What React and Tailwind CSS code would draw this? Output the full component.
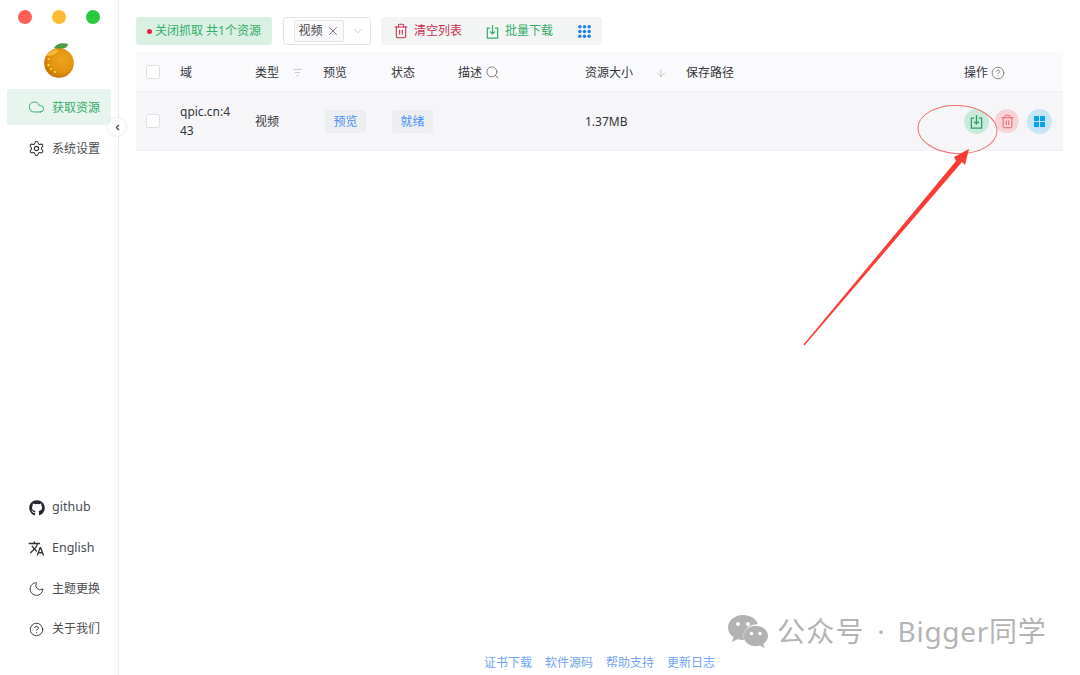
import { Cloud, Settings, Moon, CircleHelp, Trash2, X, ChevronDown, ChevronLeft, Search, ArrowDown } from 'lucide-react';
import { FaGithub } from 'react-icons/fa';
import { MdTranslate } from 'react-icons/md';

const cols = 'grid grid-cols-[44px_75px_68px_68px_67px_127px_101px_278px_1fr] items-center';

function DownloadIcon({ className }) {
  return (
    <svg viewBox="0 0 16 16" fill="none" stroke="currentColor" strokeWidth="1.3" className={className}>
      <path d="M5.5 4.5H2.5v10.500h11V4.500h-3" />
      <path d="M8 1v9.500M5.400 8 8 10.600 10.600 8" />
    </svg>
  );
}

function DotsIcon({ className }) {
  const dots = [];
  for (let y = 0; y < 3; y++) {
    for (let x = 0; x < 3; x++) {
      dots.push(<circle key={`${x}-${y}`} cx={2 + x * 5} cy={2 + y * 5} r="1.900" />);
    }
  }
  return (
    <svg viewBox="0 0 14 14" fill="currentColor" className={className}>
      {dots}
    </svg>
  );
}

function Orange() {
  return (
    <svg viewBox="0 0 32 36" className="w-[32px] h-[36px]">
      <defs>
        <radialGradient id="orange" cx="0.6" cy="0.42" r="0.65">
          <stop offset="0" stopColor="#eaa51d" />
          <stop offset="0.6" stopColor="#e3930f" />
          <stop offset="1" stopColor="#c26a07" />
        </radialGradient>
      </defs>
      <path d="M11 6C13 2 19 0 25 2c0 4-8 7-14 4Z" fill="#4f9a45" />
      <path d="M16 5.500c-.5 1-1 1.500-1 3" stroke="#7a5a20" strokeWidth="0.800" fill="none" />
      <circle cx="16" cy="21" r="14.800" fill="url(#orange)" />
      <path d="M3 14c2-4 8-7 12-6 1 3-6 7-12 6Z" fill="#f4b733" />
      <circle cx="5.500" cy="17" r="1.100" fill="#f5e23a" />
      <circle cx="5.500" cy="23" r="1.200" fill="#f5e23a" />
      <circle cx="8" cy="27" r="1.100" fill="#f5e23a" />
      <circle cx="12" cy="30" r="1.100" fill="#f5e23a" />
    </svg>
  );
}

function WeChat() {
  return (
    <svg viewBox="0 0 40 33" fill="#b3b3b3" className="w-[40px] h-[33px]">
      <path d="M15 0C6.700 0 0 5.600 0 12.500c0 3.900 2.100 7.300 5.500 9.600L4 27l5.600-2.800c1.700.5 3.500.8 5.400.8h1.200c-.5-1.300-.7-2.600-.7-4 0-6.600 6-11.800 13.600-11.800h1C28.200 3.600 22.200 0 15 0Z" />
      <path d="M40 21c0-5.600-5.500-10.200-12.200-10.200S15.600 15.400 15.600 21s5.500 10.200 12.200 10.200c1.500 0 2.900-.2 4.200-.6l4.600 2.400-1.200-4C38.200 26.900 40 24.100 40 21Z" />
      <circle cx="10" cy="9" r="2" fill="#fff" />
      <circle cx="20" cy="9" r="2" fill="#fff" />
      <circle cx="23.500" cy="18.500" r="1.700" fill="#fff" />
      <circle cx="32" cy="18.500" r="1.700" fill="#fff" />
    </svg>
  );
}

function NavItem({ icon, label, active, textClass }) {
  return (
    <div
      className={`h-[36px] mx-[7px] pl-[21px] flex items-center gap-[7px] rounded-[3px] text-[12px] ${
        active ? 'bg-[#e7f5ee] text-[#36ad6a]' : 'text-[#4a4d52]'
      }`}
    >
      <span className="w-[17px] flex justify-center">{icon}</span>
      <span className={textClass}>{label}</span>
    </div>
  );
}

function Checkbox() {
  return <div className="ml-[10px] w-[14px] h-[14px] bg-white border border-[#e0e0e6] rounded-[2px]" />;
}

export default function App() {
  return (
    <div
      className="relative w-[1080px] h-[675px] overflow-hidden bg-white flex text-[#333639] text-[12px]"
      style={{ fontFamily: '"Noto Sans", "Noto Sans CJK SC", sans-serif' }}
    >
      <aside className="relative w-[119px] shrink-0 border-r border-[#eeeeee] flex flex-col">
        <div className="pt-[10px] pl-[18px] flex gap-[20px]">
          <span className="w-[14px] h-[14px] rounded-full bg-[#ff5f57]" />
          <span className="w-[14px] h-[14px] rounded-full bg-[#ffbb33]" />
          <span className="w-[14px] h-[14px] rounded-full bg-[#28c840]" />
        </div>
        <div className="mt-[18px] ml-[43px]">
          <Orange />
        </div>
        <div className="mt-[11px] flex flex-col gap-[5px]">
          <NavItem active textClass="pt-[2px]" icon={<Cloud className="w-[18px] h-[18px]" strokeWidth={1.4} />} label="获取资源" />
          <NavItem textClass="pt-[2px]" icon={<Settings className="w-[17px] h-[17px] text-[#333639]" strokeWidth={1.5} />} label="系统设置" />
        </div>
        <button className="absolute top-[118px] left-[108px] w-[18px] h-[18px] rounded-full bg-white shadow-[0_0_3px_rgba(0,0,0,0.15)] flex items-center justify-center text-[#444]">
          <ChevronLeft className="w-[9px] h-[9px]" strokeWidth={3} />
        </button>
        <div className="mt-auto mb-[28px] flex flex-col gap-[4.5px]">
          <NavItem icon={<FaGithub className="w-[16px] h-[16px] text-[#24292f]" />} label={<span className="text-[12.500px]">github</span>} />
          <NavItem icon={<MdTranslate className="w-[17px] h-[17px] text-[#333639]" />} label={<span className="text-[12.500px]">English</span>} />
          <NavItem icon={<Moon className="w-[18px] h-[18px] text-[#333639]" strokeWidth={1.3} />} label="主题更换" />
          <NavItem icon={<CircleHelp className="w-[15px] h-[15px] text-[#333639]" strokeWidth={1.5} />} label="关于我们" />
        </div>
      </aside>

      <main className="flex-1 min-w-0 pl-[17px] pr-[17px] pt-[17px] flex flex-col">
        <div className="flex items-center h-[28px]">
          <div className="w-[136px] h-full bg-[#d9f0e3] rounded-[3px] flex items-center justify-center gap-[3px] text-[#36ad6a]">
            <span className="w-[5px] h-[5px] rounded-full bg-[#e0253a]" />
            关闭抓取 共1个资源
          </div>
          <div className="ml-[11px] w-[88px] h-full border border-[#e4e4e7] rounded-[3px] flex items-center pl-[10px]">
            <div className="w-[50px] h-[22px] bg-[#fafafc] border border-[#e4e4e7] rounded-[2px] flex items-center justify-center gap-[3px] text-[#444]">
              视频
              <X className="w-[14px] h-[14px] text-[#666]" strokeWidth={1.4} />
            </div>
            <ChevronDown className="ml-[7px] w-[14px] h-[14px] text-[#c2c2c2]" strokeWidth={1.4} />
          </div>
          <div className="ml-[10px] w-[221px] h-full bg-[#f3f5f5] rounded-[3px] flex items-center pl-[12px]">
            <Trash2 className="w-[16px] h-[16px] text-[#d03050]" strokeWidth={1.6} />
            <span className="ml-[5px] text-[#d03050]">清空列表</span>
            <DownloadIcon className="ml-[23px] w-[15px] h-[15px] text-[#36ad6a]" />
            <span className="ml-[5px] text-[#36ad6a]">批量下载</span>
            <DotsIcon className="ml-[25px] w-[13px] h-[13px] text-[#2080f0]" />
          </div>
        </div>

        <div className={`${cols} [&>span]:pt-[2px] mt-[7px] h-[40px] bg-[#fafafc] border-b border-[#efeff5]`}>
          <Checkbox />
          <span>域</span>
          <span className="flex items-center">
            类型
            <svg viewBox="0 0 12 10" fill="none" stroke="#c4c6cc" strokeWidth="1" className="ml-[13px] w-[11px] h-[9px]">
              <path d="M1 1.500h10M3 5h6M4.800 8.500h2.400" />
            </svg>
          </span>
          <span>预览</span>
          <span>状态</span>
          <span className="flex items-center gap-[3px]">
            描述
            <Search className="w-[15px] h-[15px] text-[#777]" strokeWidth={1.5} />
          </span>
          <span className="flex items-center">
            资源大小
            <ArrowDown className="ml-[22px] w-[12px] h-[12px] text-[#b5b5b5]" strokeWidth={1.4} />
          </span>
          <span>保存路径</span>
          <span className="flex items-center gap-[3px]">
            操作
            <CircleHelp className="w-[14px] h-[14px] text-[#777]" strokeWidth={1.4} />
          </span>
        </div>

        <div className={`${cols} h-[59px] bg-[#f6f6f9] border-b border-[#efeff5]`}>
          <Checkbox />
          <span className="leading-[19px]">
            qpic.cn:4
            <br />
            43
          </span>
          <span className="pt-[2px]">视频</span>
          <span className="ml-[2px] pt-[2px] w-[41px] h-[23px] rounded-[3px] bg-[#eceef2] text-[#4b8ff5] flex items-center justify-center">预览</span>
          <span className="ml-[1px] pt-[2px] w-[41px] h-[23px] rounded-[3px] bg-[#eceef2] text-[#4b8ff5] flex items-center justify-center">就绪</span>
          <span />
          <span className="pt-[2px]">1.37MB</span>
          <span />
          <div className="flex items-center">
            <span className="w-[25px] h-[25px] rounded-full bg-[#c9eadb] text-[#2a9d6a] flex items-center justify-center">
              <DownloadIcon className="w-[15px] h-[15px]" />
            </span>
            <span className="ml-[6px] w-[24px] h-[24px] rounded-full bg-[#f6d5d8] text-[#f0606a] flex items-center justify-center">
              <Trash2 className="w-[15px] h-[15px]" strokeWidth={1.6} />
            </span>
            <span className="ml-[8px] w-[25px] h-[25px] rounded-full bg-[#c6e6f8] flex items-center justify-center">
              <span className="grid grid-cols-2 gap-[1px]">
                <span className="w-[5px] h-[5px] bg-[#0ea0ea]" />
                <span className="w-[5px] h-[5px] bg-[#0ea0ea]" />
                <span className="w-[5px] h-[5px] bg-[#0ea0ea]" />
                <span className="w-[5px] h-[5px] bg-[#0ea0ea]" />
              </span>
            </span>
          </div>
        </div>

        <footer className="mt-auto mb-[4px] flex justify-center gap-[13px] text-[#70a5f5] leading-[16px]">
          <span>证书下载</span>
          <span>软件源码</span>
          <span>帮助支持</span>
          <span>更新日志</span>
        </footer>
      </main>

      {/* red annotation drawn over the screenshot */}
      <svg viewBox="0 0 1080 675" className="absolute inset-0 w-[1080px] h-[675px] pointer-events-none">
        <ellipse cx="957.500" cy="129.500" rx="39.500" ry="24" fill="none" stroke="#f66f6f" strokeWidth="1" transform="rotate(3 957.500 129.500)" />
        <polygon points="803.500,344.500 956,161 954,157 969,149 965,165 962,162 804.500,345.500" fill="#fb3b35" />
      </svg>

      {/* watermark */}
      <div className="absolute left-[728px] top-[614px] flex items-center text-[#b4b4b4] text-[28px] leading-[34px] whitespace-nowrap">
        <WeChat />
        <span className="ml-[9px] tracking-[1.2px]">公众号</span>
        <span className="w-[33px] text-center">·</span>
        <span className="tracking-[0.7px]">Bigger同学</span>
      </div>
    </div>
  );
}
